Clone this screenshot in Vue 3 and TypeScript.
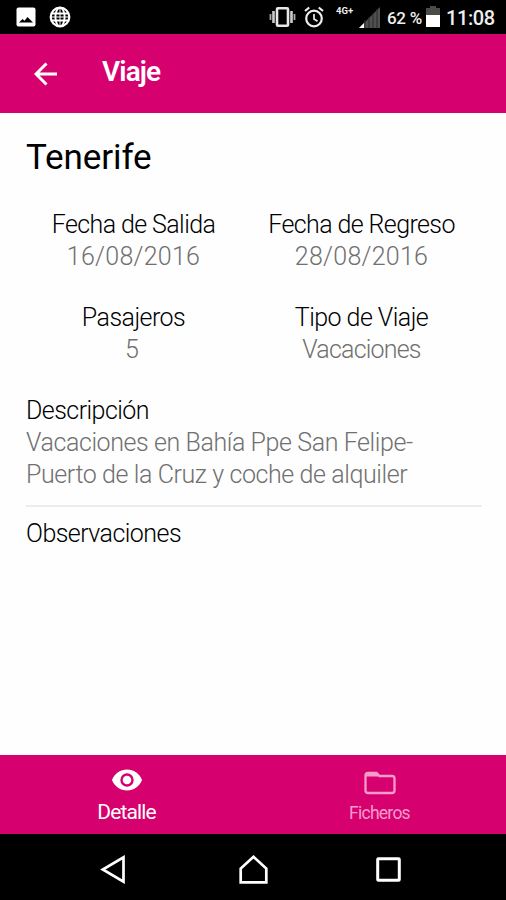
<script setup lang="ts">
interface Field {
  label: string
  value: string
  labelClass: string
  valueClass: string
}

const fields: Field[] = [
  { label: 'Fecha de Salida', value: '16/08/2016', labelClass: 'departure', valueClass: 'date' },
  { label: 'Fecha de Regreso', value: '28/08/2016', labelClass: 'return', valueClass: 'date' },
  { label: 'Pasajeros', value: '5', labelClass: 'passengers', valueClass: 'count' },
  { label: 'Tipo de Viaje', value: 'Vacaciones', labelClass: 'type', valueClass: 'kind' },
]
const description: string[] = ['Vacaciones en Bahía Ppe San Felipe-', 'Puerto de la Cruz y coche de alquiler']
</script>

<template>
  <div class="screen">
    <header class="status">
      <svg class="photo" width="20" height="20" viewBox="0 0 20 20">
        <rect x=".5" y=".5" width="19" height="19" rx="2" fill="#fff" />
        <path d="M3 15.500l3.500-3.500 2 1.700 3-3.700 5.500 5.500z" fill="#000" />
      </svg>
      <svg class="globe" width="22" height="22" viewBox="0 0 22 22">
        <circle cx="11" cy="11" r="9.300" fill="#000" stroke="#fff" stroke-width="2.200" />
        <g fill="none" stroke="#fff" stroke-width="1.900">
          <ellipse cx="11" cy="11" rx="4.600" ry="9.300" />
          <path d="M2.500 7.500h17M2.500 14.500h17" />
          <path d="M11 1v20M1 11h20" stroke-width="1" />
        </g>
      </svg>
      <span class="spacer"></span>
      <svg class="vibrate" width="27" height="22" viewBox="0 0 27 22">
        <rect x="8" y="2.300" width="11" height="17.400" rx="1" fill="none" stroke="#e8e8e8" stroke-width="2.600" />
        <path d="M4.500 5v12M22.500 5v12" stroke="#ccc" stroke-width="2.600" />
        <path d="M1.500 8v6M25.500 8v6" stroke="#aaa" stroke-width="1.800" />
      </svg>
      <svg class="alarm" width="20" height="22" viewBox="0 0 20 22">
        <g fill="none" stroke="#eee" stroke-width="2.200">
          <circle cx="10" cy="12.500" r="7.800" />
          <path d="M1 5l4.200-3.500M19 5l-4.200-3.500" />
          <path d="M10 8v5l3.500 2.200" stroke-width="1.700" />
        </g>
      </svg>
      <span class="network">4G+</span>
      <svg class="signal" width="22" height="22" viewBox="0 0 22 22">
        <path d="M0 21L21 0V21z" fill="#505050" />
        <path d="M0 21L5 16V21z" fill="#fff" />
        <path d="M6 13v8M10 10v11M14 6v15M18 2v19" stroke="#2a2a2a" stroke-width="1" />
      </svg>
      <span class="percent">62 %</span>
      <svg class="battery" width="14" height="22" viewBox="0 0 14 22">
        <path d="M4 0h6v2h4v8H0V2h4z" fill="#4b4b4b" />
        <path d="M0 9h14v12H0z" fill="#fff" />
      </svg>
      <span class="clock">11:08</span>
    </header>

    <div class="appbar">
      <svg class="back" width="24" height="24" viewBox="0 0 24 24">
        <path d="M23 12H2M12.500 1.500L2 12l10.500 10.500" fill="none" stroke="#fff" stroke-width="3" />
      </svg>
      <span class="heading">Viaje</span>
    </div>

    <main class="content">
      <h1><span>Tenerife</span></h1>
      <div class="fields">
        <div v-for="field in fields" :key="field.label" class="field">
          <div class="label"><span :class="field.labelClass">{{ field.label }}</span></div>
          <div class="value"><span :class="field.valueClass">{{ field.value }}</span></div>
        </div>
      </div>
      <section class="description">
        <div class="label"><span class="descripcion">Descripción</span></div>
        <div v-for="(line, i) in description" :key="line" class="value">
          <span :class="i === 0 ? 'first' : 'second'">{{ line }}</span>
        </div>
      </section>
      <section class="notes">
        <div class="label"><span class="observaciones">Observaciones</span></div>
      </section>
    </main>

    <nav class="tabs">
      <div class="tab active">
        <svg width="30" height="22" viewBox="0 0 30 22">
          <path d="M0 11C2.700 4.200 8.500 .5 15 .5S27.300 4.200 30 11C27.300 17.800 21.500 21.500 15 21.500S2.700 17.800 0 11z" fill="#fff" />
          <circle cx="15" cy="11" r="5.500" fill="#fff" stroke="#d6006f" stroke-width="2.400" />
        </svg>
        <span>Detalle</span>
      </div>
      <div class="tab files">
        <svg width="32" height="24" viewBox="0 0 32 24">
          <path d="M4 2h8.500l3 3H28q2.500 0 2.500 2.500V19.500q0 2.500-2.500 2.500H4q-2.500 0-2.500-2.500V4.500Q1.500 2 4 2z" fill="none" stroke="#f79bcb" stroke-width="2.300" />
          <path d="M2 5.500V3.500L4 2h8.500l3.500 3.500z" fill="#f79bcb" />
        </svg>
        <span>Ficheros</span>
      </div>
    </nav>

    <footer class="system">
      <svg class="sys-back" width="26" height="29" viewBox="0 0 26 29">
        <path d="M23.500 2.300v24.400L2.800 14.500z" fill="none" stroke="#fff" stroke-width="2.700" />
      </svg>
      <svg class="sys-home" width="29" height="29" viewBox="0 0 29 29">
        <path d="M1.700 27.300V13.500L14.500 1.800 27.300 13.500v13.800z" fill="none" stroke="#fff" stroke-width="2.700" />
      </svg>
      <svg class="sys-recent" width="25" height="25" viewBox="0 0 25 25">
        <rect x="1.700" y="1.700" width="21.600" height="21.600" rx=".7" fill="none" stroke="#fff" stroke-width="3" />
      </svg>
    </footer>
  </div>
</template>

<style>
body {
  margin: 0;
}
</style>

<style scoped>
.screen {
  width: 506px;
  height: 900px;
  display: flex;
  flex-direction: column;
  overflow: hidden;
  background: #fefefe;
  font-family: Roboto, "Open Sans", sans-serif;
}
svg {
  display: block;
  flex: none;
}
span {
  white-space: nowrap;
}
.status {
  height: 34px;
  flex: none;
  display: flex;
  align-items: center;
  box-sizing: border-box;
  padding: 0 10px 0 16px;
  background: #000;
  color: #eee;
}
.globe {
  margin-left: 13px;
}
.spacer {
  flex: 1;
}
.alarm {
  margin-left: 8px;
}
.network {
  width: 18px;
  margin: 0 5px 13px 12px;
  font-size: 9.500px;
  font-weight: 700;
  line-height: 11px;
}
.signal {
  margin-top: 1px;
}
.percent {
  width: 37px;
  margin: 2px 0 0 6px;
  font-size: 17px;
  font-weight: 500;
  letter-spacing: -0.3px;
}
.battery {
  margin-left: 2px;
}
.clock {
  width: 50px;
  margin: 2px 0 0 6px;
  font-size: 20px;
  font-weight: 500;
  letter-spacing: -0.4px;
}
.appbar {
  height: 79px;
  flex: none;
  display: flex;
  align-items: center;
  box-sizing: border-box;
  padding-left: 34px;
  background: #d6006f;
}
.heading {
  margin: -3px 0 0 44px;
  color: #fff;
  font-size: 28px;
  font-weight: 600;
  line-height: 36px;
  letter-spacing: -0.9px;
}
.content {
  flex: 1;
  box-sizing: border-box;
  padding: 25px 24px 0 26px;
}
h1 {
  margin: 0;
  height: 71px;
  font-size: 35px;
  line-height: 40px;
  font-weight: 400;
  letter-spacing: -0.1px;
  color: #000;
}
.fields {
  display: grid;
  grid-template-columns: 215px 1fr;
  row-gap: 28px;
  text-align: center;
}
.fields .field:nth-child(even) {
  padding-right: 0;
}
.label,
.value {
  height: 32.400px;
  font-size: 25px;
  line-height: 32.400px;
  font-weight: 300;
}
.label {
  color: #000;
  letter-spacing: -0.55px;
}
.value {
  color: #707070;
}
.departure,
.return {
  letter-spacing: -0.6px;
}
.date {
  letter-spacing: 0.25px;
}
.count {
  margin-right: 3px;
}
.kind {
  letter-spacing: -0.8px;
}
.first,
.second {
  letter-spacing: -0.41px;
}
.description {
  margin-top: 28px;
  padding-bottom: 13px;
  border-bottom: 2px solid #ececec;
}
.notes {
  padding-top: 11px;
}
.tabs {
  height: 79px;
  flex: none;
  display: grid;
  grid-template-columns: 1fr 1fr;
  background: #d6006f;
}
.tab {
  display: flex;
  flex-direction: column;
  align-items: center;
}
.active {
  padding-top: 14px;
  color: #fff;
}
.active span {
  margin-top: 8px;
  font-size: 21px;
  line-height: 26px;
  letter-spacing: -0.9px;
}
.files {
  padding-top: 16px;
  color: #f79bcb;
}
.files span {
  margin-top: 7px;
  font-size: 17.500px;
  line-height: 22px;
  letter-spacing: -0.75px;
}
.system {
  height: 66px;
  flex: none;
  display: flex;
  align-items: center;
  box-sizing: border-box;
  padding: 4px 0 0 100px;
  background: #000;
}
.sys-home {
  margin-left: 113px;
}
.sys-recent {
  margin-left: 108px;
}
</style>
